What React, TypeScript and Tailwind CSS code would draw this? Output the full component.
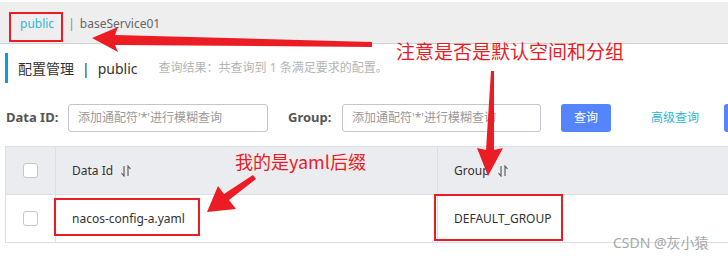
import React from "react";

const FONT = { fontFamily: '"Noto Sans", "Noto Sans CJK SC", sans-serif' };

function SortIcon() {
  return (
    <svg width="10" height="12" viewBox="0 0 10 12" className="inline-block ml-[8px]">
      <path d="M3 1 V11 L0.5 8" fill="none" stroke="#555" strokeWidth="1.1" />
      <path d="M7 11 V1 L9.5 4" fill="none" stroke="#555" strokeWidth="1.1" />
    </svg>
  );
}

function Checkbox() {
  return <span className="block w-[15px] h-[15px] rounded-[3px] border border-[#c4c6cf] bg-white" />;
}

export default function App() {
  return (
    <div className="relative w-[728px] h-[259px] overflow-hidden bg-white text-[#333] whitespace-nowrap" style={FONT}>
      {/* namespace bar */}
      <div className="mt-[2px] h-[42px] bg-[#eeeeee] border-b border-[#d2d2d2] flex items-center pl-[20px] pt-[2px] text-[12px]">
        <span className="text-[#33b5d6]">public</span>
        <span className="ml-[14px] text-[#888]">|</span>
        <span className="ml-[5px] text-[#666]">baseService01</span>
      </div>

      {/* page title */}
      <div className="mt-[9px] h-[30px] flex items-center">
        <div className="ml-[5px] w-[3px] h-[30px] bg-[#0f9bd7]" />
        <span className="ml-[10px] text-[14px] text-[#333]">配置管理</span>
        <span className="ml-[8px] text-[14px] text-[#333]">|</span>
        <span className="ml-[8px] text-[14px] text-[#333]">public</span>
        <span className="ml-[21px] text-[12px] text-[#b5b5b5]">查询结果：共查询到 1 条满足要求的配置。</span>
      </div>

      {/* search form */}
      <div className="mt-[21px] h-[28px] flex items-center">
        <span className="shrink-0 ml-[6px] w-[62px] text-[13px] font-bold text-[#555]">Data ID:</span>
        <div className="shrink-0 w-[200px] h-[28px] rounded-[3px] border border-[#c4c6cf] flex items-center pl-[9px] text-[12px] text-[#9a9a9a]">
          添加通配符'*'进行模糊查询
        </div>
        <span className="shrink-0 ml-[20px] w-[54px] text-[13px] font-bold text-[#555]">Group:</span>
        <div className="shrink-0 w-[199px] h-[28px] rounded-[3px] border border-[#c4c6cf] flex items-center pl-[9px] text-[12px] text-[#9a9a9a]">
          添加通配符'*'进行模糊查询
        </div>
        <div className="shrink-0 ml-[20px] w-[50px] h-[28px] rounded-[3px] bg-[#5584ff] flex items-center justify-center text-[12px] text-white">
          查询
        </div>
        <span className="shrink-0 ml-[40px] w-[48px] text-[12px] text-[#2fb8d8]">高级查询</span>
        <div className="shrink-0 ml-[25px] w-[20px] h-[28px] rounded-[3px] bg-[#5584ff]" />
      </div>

      {/* table */}
      <div className="mt-[14px] ml-[5px] border-l border-t border-[#dcdee3] text-[12px]">
        <div className="h-[48px] bg-[#ebecf0] flex border-b border-[#dcdee3]">
          <div className="w-[50px] flex items-center justify-center border-r border-[#dcdee3]">
            <Checkbox />
          </div>
          <div className="w-[382px] flex items-center pl-[16px] text-[#333] border-r border-[#dcdee3]">
            Data Id
            <SortIcon />
          </div>
          <div className="flex-1 flex items-center pl-[16px] text-[#333]">
            Group
            <SortIcon />
          </div>
        </div>
        <div className="h-[48px] flex border-b border-[#dcdee3]">
          <div className="w-[50px] flex items-center justify-center border-r border-[#dcdee3]">
            <Checkbox />
          </div>
          <div className="w-[382px] flex items-center pl-[16px] text-[#333] border-r border-[#dcdee3]">
            nacos-config-a.yaml
          </div>
          <div className="flex-1 flex items-center pl-[16px] text-[#333]">DEFAULT_GROUP</div>
        </div>
      </div>

      {/* annotations */}
      <div className="absolute left-[9px] top-[12px] w-[54px] h-[30px] border-2 border-[#ec1c24]" />
      <div className="absolute left-[54px] top-[198px] w-[146px] h-[38px] border-2 border-[#ec1c24]" />
      <div className="absolute left-[434px] top-[194px] w-[129px] h-[47px] border-2 border-[#ec1c24]" />

      <div className="absolute left-[396px] top-[41px] text-[19px] leading-[20px] text-[#ec1c24]" style={{ fontFamily: '"Noto Sans CJK SC", sans-serif' }}>
        注意是否是默认空间和分组
      </div>
      <div className="absolute left-[235px] top-[151px] text-[18px] leading-[20px] text-[#ec1c24]" style={{ fontFamily: '"Noto Sans CJK SC", sans-serif' }}>
        我的是yaml后缀
      </div>

      <svg className="absolute inset-0 pointer-events-none" width="728" height="259" viewBox="0 0 728 259">
        <polygon points="92,38 118,27 115,35 372,42 372,47 115,45 118,52" fill="#ec1c24" />
        <polygon points="488,176 477,148 486,150 491,71 494,71 494,150 503,148" fill="#ec1c24" />
        <polygon points="207,212 218,186 224,194 253,175 256,179 229,200 236,209" fill="#ec1c24" />
      </svg>

      <div className="absolute left-[613px] top-[234px] text-[14px] leading-[18px] text-[#a8a8a8]">CSDN @灰小猿</div>
    </div>
  );
}
